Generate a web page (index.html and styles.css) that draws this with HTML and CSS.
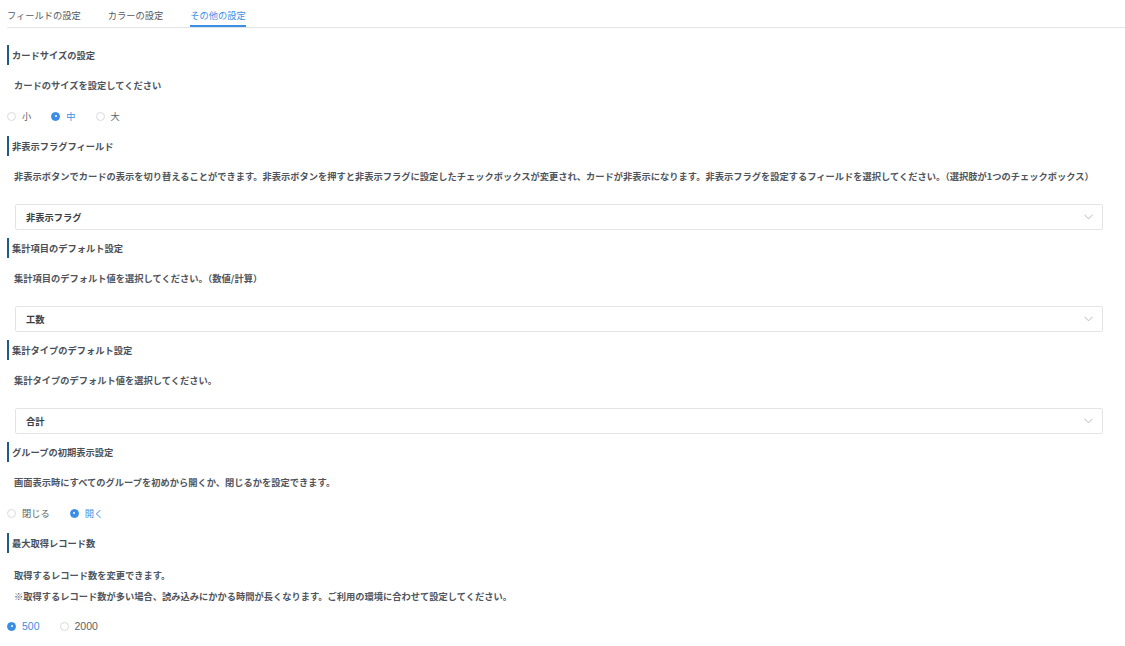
FILE: index.html
```html
<!DOCTYPE html>
<html lang="ja">
<head>
<meta charset="utf-8">
<link rel="stylesheet" href="styles.css">
</head>
<body>
<div class="page">
  <div class="tabs">
    <div class="tab">フィールドの設定</div>
    <div class="tab">カラーの設定</div>
    <div class="tab active">その他の設定</div>
  </div>

  <div class="content">
    <div class="section first">
      <div class="heading">カードサイズの設定</div>
      <div class="desc">カードのサイズを設定してください</div>
      <div class="radios">
        <label class="radio"><span class="dot"></span><span class="lbl">小</span></label>
        <label class="radio checked"><span class="dot"></span><span class="lbl">中</span></label>
        <label class="radio"><span class="dot"></span><span class="lbl">大</span></label>
      </div>
    </div>

    <div class="section after-radio">
      <div class="heading">非表示フラグフィールド</div>
      <div class="desc">非表示ボタンでカードの表示を切り替えることができます。非表示ボタンを押すと非表示フラグに設定したチェックボックスが変更され、カードが非表示になります。非表示フラグを設定するフィールドを選択してください。（選択肢が1つのチェックボックス）</div>
      <div class="select"><span class="val">非表示フラグ</span><svg class="chev" width="9" height="6" viewBox="0 0 9 6"><path d="M0.5 0.8 L4.5 4.8 L8.5 0.8" fill="none" stroke="#b5b8bd" stroke-width="1"/></svg></div>
    </div>

    <div class="section">
      <div class="heading">集計項目のデフォルト設定</div>
      <div class="desc">集計項目のデフォルト値を選択してください。（数値/計算）</div>
      <div class="select"><span class="val">工数</span><svg class="chev" width="9" height="6" viewBox="0 0 9 6"><path d="M0.5 0.8 L4.5 4.8 L8.5 0.8" fill="none" stroke="#b5b8bd" stroke-width="1"/></svg></div>
    </div>

    <div class="section">
      <div class="heading">集計タイプのデフォルト設定</div>
      <div class="desc">集計タイプのデフォルト値を選択してください。</div>
      <div class="select"><span class="val">合計</span><svg class="chev" width="9" height="6" viewBox="0 0 9 6"><path d="M0.5 0.8 L4.5 4.8 L8.5 0.8" fill="none" stroke="#b5b8bd" stroke-width="1"/></svg></div>
    </div>

    <div class="section">
      <div class="heading">グループの初期表示設定</div>
      <div class="desc">画面表示時にすべてのグループを初めから開くか、閉じるかを設定できます。</div>
      <div class="radios">
        <label class="radio"><span class="dot"></span><span class="lbl">閉じる</span></label>
        <label class="radio checked"><span class="dot"></span><span class="lbl">開く</span></label>
      </div>
    </div>

    <div class="section after-radio">
      <div class="heading">最大取得レコード数</div>
      <div class="desc loose">取得するレコード数を変更できます。</div>
      <div class="desc tight">※取得するレコード数が多い場合、読み込みにかかる時間が長くなります。ご利用の環境に合わせて設定してください。</div>
      <div class="radios last">
        <label class="radio checked"><span class="dot"></span><span class="lbl num">500</span></label>
        <label class="radio"><span class="dot"></span><span class="lbl num">2000</span></label>
      </div>
    </div>
  </div>
</div>
</body>
</html>
```

FILE: styles.css
```css
html, body {
  margin: 0;
  padding: 0;
  background: #ffffff;
}

body {
  font-family: "Noto Sans CJK JP", "Noto Sans", sans-serif;
  font-size: 9.25px;
  color: #4a4f57;
}

.page {
  padding-left: 7px;
}

.tabs {
  display: flex;
  gap: 27px;
  border-bottom: 1px solid #e2e3e5;
  height: 27px;
}

.tab {
  height: 25px;
  line-height: 12px;
  padding-top: 9px;
  box-sizing: border-box;
  color: #555a61;
}

.tab.active {
  height: 27px;
  color: #3a8ee6;
  border-bottom: 2px solid #3a8ee6;
}

.content {
  display: flex;
  flex-direction: column;
  padding-right: 22px;
}

.section {
  display: flex;
  flex-direction: column;
  margin-top: 8px;
}

.section.first {
  margin-top: 17px;
}

.section.after-radio {
  margin-top: 10px;
}

.heading {
  height: 20px;
  line-height: 20px;
  border-left: 2px solid #1d5c86;
  padding-left: 3px;
  font-weight: 700;
  color: #4a4f57;
}

.desc {
  margin-top: 10px;
  height: 20px;
  line-height: 20px;
  padding-left: 7px;
  font-weight: 700;
  color: #50555d;
  white-space: nowrap;
}

.desc.loose {
  margin-top: 12px;
}

.desc.tight {
  margin-top: 1px;
}

.radios {
  display: flex;
  margin-top: 11px;
  height: 20px;
  align-items: center;
}

.radios.last {
  margin-top: 10px;
}

.radio {
  display: flex;
  align-items: center;
  margin-right: 20px;
  color: #5a5f66;
}

.radio .dot {
  width: 9px;
  height: 9px;
  box-sizing: border-box;
  border: 1px solid #d8dadd;
  border-radius: 50%;
  margin-right: 6px;
  background: #fff;
  position: relative;
}

.radio.checked .dot {
  background: #3a8ee6;
  border-color: #3a8ee6;
}

.radio.checked .dot::after {
  content: "";
  position: absolute;
  left: 2.5px;
  top: 2.5px;
  width: 2px;
  height: 2px;
  border-radius: 50%;
  background: #fff;
}

.radio .lbl.num {
  font-family: "Liberation Sans", "Noto Sans", sans-serif;
  font-size: 10.5px;
}

.radio.checked .lbl {
  color: #3a8ee6;
}

.select {
  margin-top: 18px;
  margin-left: 8px;
  height: 26px;
  box-sizing: border-box;
  border: 1px solid #e3e4e7;
  border-radius: 2px;
  display: flex;
  align-items: center;
  justify-content: space-between;
  padding: 0 9px 0 10px;
}

.select .val {
  font-weight: 700;
  color: #3a3e45;
}

.chev {
  display: block;
}
```
